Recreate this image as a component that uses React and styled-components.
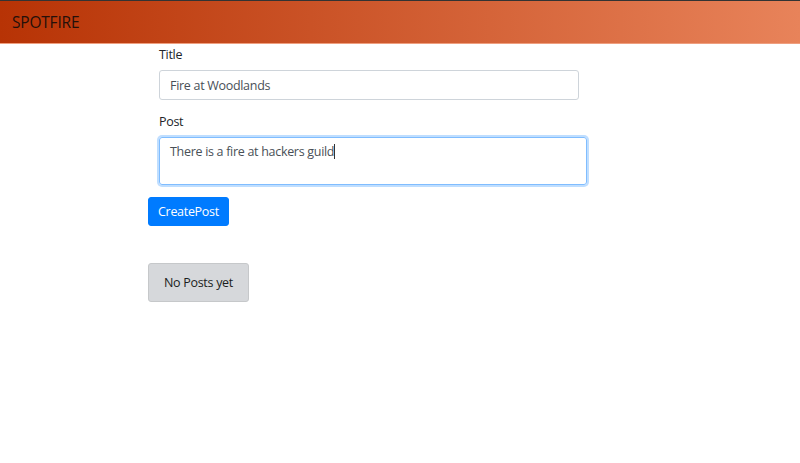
import { createGlobalStyle, styled } from "styled-components";

const GlobalStyle = createGlobalStyle`
  * { box-sizing: border-box; }
  body {
    margin: 0;
    background: #fff;
    font-family: "Open Sans", "Noto Sans", sans-serif;
    color: #212529;
    letter-spacing: -0.3px;
  }
`;

const Header = styled.header`
  height: 44px;
  border-top: 1px solid #333;
  border-bottom: 1px solid #ef9f7f;
  background: linear-gradient(to right, #b73305, #e8835a);
  display: flex;
  align-items: center;
  padding-left: 12px;
`;

const Brand = styled.span`
  font-size: 15.5px;
  color: #24100a;
  letter-spacing: -0.2px;
`;

const Main = styled.main`
  padding-left: 148px;
`;

const Form = styled.form`
  display: flex;
  flex-direction: column;
`;

const Group = styled.div`
  display: flex;
  flex-direction: column;
  padding-left: 11px;
  margin-bottom: ${(p) => p.$gap}px;
`;

const Label = styled.label`
  font-size: 12.5px;
  line-height: 18px;
  margin: 2px 0 6px;
  color: #212529;
`;

const Input = styled.input`
  width: ${(p) => p.$w}px;
  height: ${(p) => p.$h}px;
  padding: 0 10px;
  font: inherit;
  font-size: 12.5px;
  letter-spacing: -0.3px;
  color: #495057;
  border: 1px solid #ced4da;
  border-radius: 3px;
  outline: none;
`;

const Area = styled.div`
  width: ${(p) => p.$w}px;
  height: ${(p) => p.$h}px;
  padding: 5px 10px;
  font-size: 12.5px;
  color: #495057;
  border: 1px solid #80bdff;
  border-radius: 3px;
  box-shadow: 0 0 0 2px rgba(0, 123, 255, 0.25);
`;

const Caret = styled.span`
  display: inline-block;
  width: 1px;
  height: 15px;
  background: #333;
  vertical-align: -3px;
`;

const Button = styled.button`
  align-self: flex-start;
  height: 29px;
  padding: 0 9px;
  font: inherit;
  font-size: 12.5px;
  letter-spacing: -0.3px;
  color: #fff;
  background: #007bff;
  border: 1px solid #007bff;
  border-radius: 3px;
`;

const Empty = styled.div`
  display: inline-flex;
  align-items: center;
  margin-top: 37px;
  height: 39px;
  padding: 0 15px;
  font-size: 12.5px;
  color: #1b1e21;
  background: #d6d8db;
  border: 1px solid #c6c8ca;
  border-radius: 3px;
`;

export default function App() {
  return (
    <>
      <GlobalStyle />
      <Header>
        <Brand>SPOTFIRE</Brand>
      </Header>
      <Main>
        <Form>
          <Group $gap={11}>
            <Label>Title</Label>
            <Input $w={420} $h={30} defaultValue="Fire at Woodlands" />
          </Group>
          <Group $gap={12}>
            <Label>Post</Label>
            <Area $w={428} $h={48}>
              There is a fire at hackers guild
              <Caret />
            </Area>
          </Group>
          <Button type="button">CreatePost</Button>
        </Form>
        <Empty>No Posts yet</Empty>
      </Main>
    </>
  );
}
